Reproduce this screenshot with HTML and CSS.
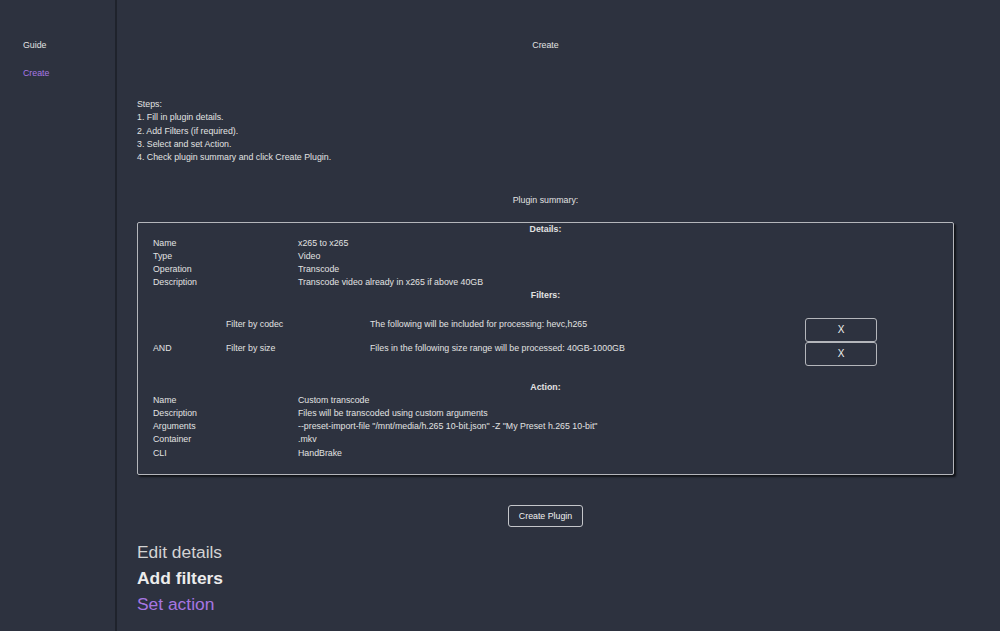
FILE: index.html
```html
<!DOCTYPE html>
<html lang="en">
  <head>
    <meta charset="UTF-8">
    <title>Create plugin</title>
    <link rel="stylesheet" href="styles.css">
  </head>
  <body>
    <nav class="sidebar">
      <a class="nav-link" href="#">Guide</a>
      <a class="nav-link active" href="#">Create</a>
    </nav>
    <main class="content">
      <div class="page-title">Create</div>
      <div class="steps">
        <div>Steps:</div>
        <div>1. Fill in plugin details.</div>
        <div>2. Add Filters (if required).</div>
        <div>3. Select and set Action.</div>
        <div>4. Check plugin summary and click Create Plugin.</div>
      </div>
      <div class="summary-title">Plugin summary:</div>
      <section class="summary">
        <div class="section-head">Details:</div>
        <div class="kv">
          <span>Name</span><span>x265 to x265</span>
          <span>Type</span><span>Video</span>
          <span>Operation</span><span>Transcode</span>
          <span>Description</span><span>Transcode video already in x265 if above 40GB</span>
        </div>
        <div class="section-head">Filters:</div>
        <div class="filters">
          <div class="filter-row">
            <span></span>
            <span>Filter by codec</span>
            <span>The following will be included for processing: hevc,h265</span>
            <button class="remove-btn">X</button>
          </div>
          <div class="filter-row">
            <span>AND</span>
            <span>Filter by size</span>
            <span>Files in the following size range will be processed: 40GB-1000GB</span>
            <button class="remove-btn">X</button>
          </div>
        </div>
        <div class="section-head">Action:</div>
        <div class="kv">
          <span>Name</span><span>Custom transcode</span>
          <span>Description</span><span>Files will be transcoded using custom arguments</span>
          <span>Arguments</span><span>--preset-import-file "/mnt/media/h.265 10-bit.json" -Z "My Preset h.265 10-bit"</span>
          <span>Container</span><span>.mkv</span>
          <span>CLI</span><span>HandBrake</span>
        </div>
      </section>
      <div class="create-row">
        <button class="create-btn">Create Plugin</button>
      </div>
      <div class="stages">
        <div class="stage">Edit details</div>
        <div class="stage current">Add filters</div>
        <div class="stage next">Set action</div>
      </div>
    </main>
  </body>
</html>
```

FILE: styles.css
```css
html, body {
  height: 100%;
}
body {
  margin: 0;
  display: flex;
  background-color: #2d323f;
  color: #e2e2e2;
  font-family: "Liberation Sans", Arial, Helvetica, sans-serif;
  font-size: 8.8px;
  line-height: 13.2px;
  overflow: hidden;
}
.sidebar {
  width: 117px;
  flex-shrink: 0;
  border-right: 2px solid #1f232c;
  padding: 39px 0 0 23px;
  box-sizing: border-box;
  display: flex;
  flex-direction: column;
  gap: 15px;
}
.nav-link {
  color: #e2e2e2;
  text-decoration: none;
}
.nav-link.active {
  color: #a878e4;
}
.content {
  margin-left: 20px;
  width: 817px;
  padding-top: 39px;
}
.page-title {
  text-align: center;
}
.steps {
  margin-top: 46px;
}
.summary-title {
  margin-top: 30px;
  text-align: center;
}
.summary {
  margin-top: 15px;
  border: 1px solid #b4b6bb;
  border-radius: 2px;
  box-shadow: 2px 2px 2px #111318;
  padding: 0 15px 14px 15px;
}
.section-head {
  text-align: center;
  font-weight: bold;
}
.kv {
  display: grid;
  grid-template-columns: 145px 1fr;
}
.filters {
  padding: 15px 0 15px 0;
}
.filter-row {
  display: grid;
  grid-template-columns: 73px 144px 435px 72px;
  height: 24px;
}
.remove-btn {
  height: 24px;
  background: transparent;
  border: 1px solid #b4b6bb;
  border-radius: 3px;
  color: #f0f0f0;
  font-family: inherit;
  font-size: 10px;
  padding: 0;
}
.create-row {
  margin-top: 30px;
  display: flex;
  justify-content: center;
}
.create-btn {
  height: 22px;
  padding: 0 10px;
  background: transparent;
  border: 1px solid #c4c6ca;
  border-radius: 3px;
  color: #f0f0f0;
  font-family: inherit;
  font-size: 8.8px;
}
.stages {
  margin-top: 12px;
  font-size: 17.4px;
  line-height: 26px;
}
.stage {
  color: #d3d3d3;
}
.stage.current {
  font-weight: bold;
  color: #ececec;
}
.stage.next {
  color: #a676e2;
}
```
